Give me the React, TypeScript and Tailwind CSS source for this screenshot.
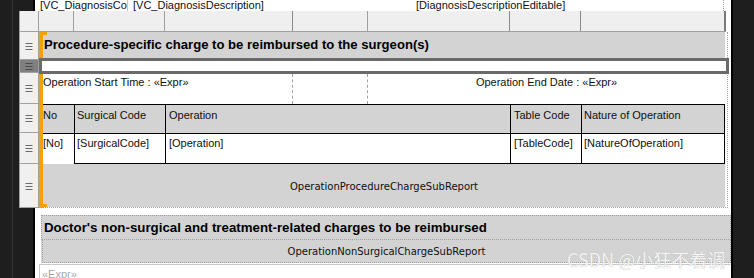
import React from "react"

const sans = "font-['Liberation_Sans',Arial,sans-serif]"

function Grip({ dark }: { dark?: boolean }) {
  return (
    <svg width="8" height="8" viewBox="0 0 8 8" className="block">
      <g stroke={dark ? "#4a4a4a" : "#6a6a6a"} strokeWidth="1">
        <line x1="0.5" y1="1.5" x2="7.5" y2="1.5" />
        <line x1="0.5" y1="4.5" x2="7.5" y2="4.5" />
        <line x1="0.5" y1="7.5" x2="7.5" y2="7.5" />
      </g>
    </svg>
  )
}

function Handle({ h, selected, grip = true }: { h: string; selected?: boolean; grip?: boolean }) {
  return (
    <div
      className={`${h} flex shrink-0 items-center justify-center border-b border-[#a0a0a0] ${
        selected ? "bg-[#808080]" : "bg-[#f0f0f0]"
      }`}
    >
      {grip && <Grip dark={selected} />}
    </div>
  )
}

export default function App() {
  return (
    <div className={`relative flex h-[278px] w-[754px] overflow-hidden bg-[#1e1e1e] text-[11px] text-[#101010] ${sans}`}>
      {/* left chrome */}
      <div className="w-[12px] shrink-0 bg-[#1e1e1e]" />
      <div className="w-[1px] shrink-0 bg-[#333333]" />
      <div className="w-[20px] shrink-0 bg-[#1e1e1e]" />
      <div className="w-[2px] shrink-0 bg-black" />

      {/* design surface */}
      <div className="flex w-[696px] shrink-0 flex-col bg-white">
        {/* fields above the tablix, scrolled half out of view */}
        <div className="flex h-[11px] shrink-0 overflow-hidden leading-[11px]">
          <div className="ml-[4px] w-[89px] overflow-hidden whitespace-nowrap border-r border-[#c8c8c8] pl-[1px]">[VC_DiagnosisCode]</div>
          <div className="ml-[3px] w-[283px] whitespace-nowrap pl-[2px]">[VC_DiagnosisDescription]</div>
          <div className="w-[309px] whitespace-nowrap pl-[2px]">[DiagnosisDescriptionEditable]</div>
          <div className="w-[2px] border-l border-dotted border-[#a0a0a0]" />
        </div>

        {/* tablix with row handles */}
        <div className="-ml-[16px] flex shrink-0">
          <div className="flex w-[20px] shrink-0 flex-col border-x border-[#a0a0a0]">
            <Handle h="h-[21px]" grip={false} />
            <Handle h="h-[28px]" />
            <Handle h="h-[13px]" selected />
            <Handle h="h-[31px]" />
            <Handle h="h-[29px]" />
            <Handle h="h-[31px]" />
            <Handle h="h-[44px]" />
          </div>

          <div className="flex w-[690px] flex-col">
            {/* column handles */}
            <div className="grid h-[21px] w-[687px] shrink-0 grid-cols-[35px_91px_128px_75px_142px_71px_145px] border-b border-[#a0a0a0] bg-[#efefef]">
              <div className="border-r border-[#a0a0a0]" />
              <div className="border-r border-[#a0a0a0]" />
              <div className="border-r border-[#8a8a8a]" />
              <div className="border-r border-[#a0a0a0]" />
              <div className="border-r border-[#8a8a8a]" />
              <div className="border-r border-[#8a8a8a]" />
              <div className="border-r-2 border-[#7a7a7a]" />
            </div>

            <div className="flex">
              {/* selection bar */}
              <div className="relative w-[4px] bg-[#f0a30a]">
                <div className="absolute left-0 top-0 h-[3px] w-[8px] bg-[#f0a30a]" />
                <div className="absolute bottom-[1px] left-0 h-[3px] w-[8px] bg-[#f0a30a]" />
              </div>

              <div className="flex w-[685px] flex-col border-b border-r border-dotted border-[#a0a0a0]">
                <div className="flex h-[26px] w-[682px] shrink-0 items-center whitespace-nowrap bg-[#d3d3d3] pl-[1px] text-[13.1px] font-bold text-black">
                  Procedure-specific charge to be reimbursed to the surgeon(s)
                </div>

                <div className="relative z-10 -ml-[4px] h-[16px] w-[690px] shrink-0 border-[3px] border-[#6a6a6a] bg-white" />

                <div className="grid h-[30px] w-[682px] shrink-0 grid-cols-[250px_75px_357px]">
                  <div className="whitespace-nowrap border-r border-dashed border-[#a0a0a0]">Operation Start Time : «Expr»</div>
                  <div className="border-r border-dashed border-[#a0a0a0]" />
                  <div className="text-center">Operation End Date : «Expr»</div>
                </div>

                <div className="grid h-[29px] w-[682px] shrink-0 grid-cols-[31px_91px_345px_71px_144px] border-t border-black bg-[#d3d3d3]">
                  <div className="pt-[2px]">No</div>
                  <div className="border-l border-black pl-[2px] pt-[2px]">Surgical Code</div>
                  <div className="border-l border-black pl-[3px] pt-[2px]">Operation</div>
                  <div className="border-l border-black pl-[3px] pt-[2px]">Table Code</div>
                  <div className="border-x border-black pl-[2px] pt-[2px]">Nature of Operation</div>
                </div>

                <div className="grid h-[31px] w-[682px] shrink-0 grid-cols-[31px_91px_345px_71px_144px] border-t border-black">
                  <div className="pt-[1px]">[No]</div>
                  <div className="border-b border-l border-black pl-[2px] pt-[1px]">[SurgicalCode]</div>
                  <div className="border-b border-l border-black pl-[3px] pt-[1px]">[Operation]</div>
                  <div className="border-b border-l border-black pl-[3px] pt-[1px]">[TableCode]</div>
                  <div className="border-b border-x border-black pl-[2px] pt-[1px]">[NatureOfOperation]</div>
                </div>

                <div className="flex h-[43px] w-[682px] shrink-0 items-center justify-center bg-[#d3d3d3] pt-[1px] font-['DejaVu_Sans',Tahoma,sans-serif] text-[10px]">
                  OperationProcedureChargeSubReport
                </div>
              </div>
            </div>
          </div>
        </div>

        {/* second section */}
        <div className="ml-[6px] mt-[7px] flex w-[690px] shrink-0 flex-col bg-[#d3d3d3]">
          <div className="flex h-[25px] items-center whitespace-nowrap border border-dotted border-[#a0a0a0] pl-[2px] text-[13.3px] font-bold text-black">
            Doctor's non-surgical and treatment-related charges to be reimbursed
          </div>
          <div className="ml-[1px] flex h-[23px] items-center justify-center border-x border-b border-dotted border-[#a0a0a0] font-['DejaVu_Sans',Tahoma,sans-serif] text-[10px]">
            OperationNonSurgicalChargeSubReport
          </div>
        </div>

        <div className="ml-[4px] mt-[1px] h-[20px] shrink-0 border-l border-t border-[#c8c8c8] pl-[2px] pt-[1px] text-[#a8a8a8]">
          «Expr»
        </div>
      </div>

      <div className="w-[2px] shrink-0 bg-black" />
      <div className="flex-1 bg-[#1e1e1e]" />

      {/* screenshot watermark */}
      <div className="pointer-events-none absolute left-[567px] top-[246px] whitespace-nowrap font-['Noto_Sans_CJK_SC',sans-serif] text-[18px] text-[#f4f4f4] [text-shadow:0_0_1px_#b0b0b0]">
        CSDN @小狂不着调
      </div>
    </div>
  )
}
